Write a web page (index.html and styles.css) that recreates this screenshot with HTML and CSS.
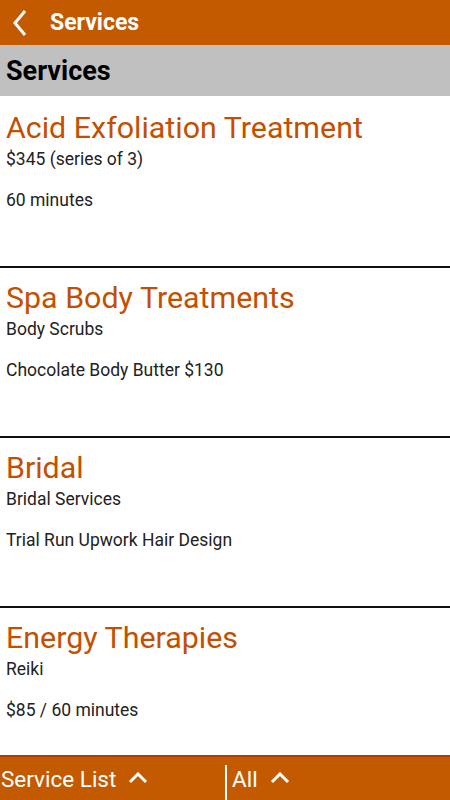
FILE: index.html
```html
<!DOCTYPE html>
<html>
<head>
<meta charset="utf-8">
<link rel="stylesheet" href="styles.css">
</head>
<body>
<div class="app">
  <header class="topbar">
    <svg class="back" width="16" height="28" viewBox="0 0 16 28"><path d="M13 2 L3 14 L13 26" fill="none" stroke="#fff" stroke-width="3"/></svg>
    <span class="topbar-title">Services</span>
  </header>
  <div class="section-head">Services</div>
  <main class="list">
    <div class="item">
      <div class="title">Acid Exfoliation Treatment</div>
      <div class="sub">$345 (series of 3)</div>
      <div class="detail">60 minutes</div>
    </div>
    <div class="item">
      <div class="title">Spa Body Treatments</div>
      <div class="sub">Body Scrubs</div>
      <div class="detail">Chocolate Body Butter $130</div>
    </div>
    <div class="item">
      <div class="title">Bridal</div>
      <div class="sub">Bridal Services</div>
      <div class="detail">Trial Run Upwork Hair Design</div>
    </div>
    <div class="item">
      <div class="title">Energy Therapies</div>
      <div class="sub">Reiki</div>
      <div class="detail">$85 / 60 minutes</div>
    </div>
  </main>
  <footer class="bottombar">
    <div class="tab tab-left">Service List <svg class="up" width="20" height="12" viewBox="0 0 20 12"><path d="M2 10 L10 2 L18 10" fill="none" stroke="#fff" stroke-width="3"/></svg></div>
    <div class="divider"></div>
    <div class="tab tab-right">All <svg class="up" width="20" height="12" viewBox="0 0 20 12"><path d="M2 10 L10 2 L18 10" fill="none" stroke="#fff" stroke-width="3"/></svg></div>
  </footer>
</div>
</body>
</html>
```
FILE: styles.css
```css
* { box-sizing: border-box; }
html, body { margin: 0; padding: 0; }
body { font-family: Roboto, "Liberation Sans", sans-serif; background: #fff; }
.app { width: 450px; height: 800px; display: flex; flex-direction: column; overflow: hidden; }
.topbar { height: 45px; background: #c45a00; display: flex; align-items: center; flex-shrink: 0; }
.back { margin-left: 12px; }
.topbar-title { color: #fff; font-weight: bold; font-size: 23px; margin-left: 22px; }
.section-head { height: 51px; background: #c0c0c0; color: #000; font-weight: bold; font-size: 27px; padding-left: 6px; display: flex; align-items: center; flex-shrink: 0; }
.list { flex: 1; overflow: hidden; }
.item { height: 170px; border-top: 2px solid #111; padding: 10px 6px 0; }
.item:first-child { border-top: none; padding-top: 12px; }
.title { color: #c44f00; font-size: 30.4px; line-height: 40px; }
.sub { color: #222; font-size: 17.5px; line-height: 22px; margin-top: 0; }
.detail { color: #222; font-size: 17.5px; line-height: 22px; margin-top: 19px; }
.bottombar { height: 45px; background: #c45a00; border-top: 2px solid #b03a00; display: flex; align-items: center; flex-shrink: 0; color: #fff; font-size: 22.5px; }
.tab { display: flex; align-items: center; }
.tab-left { width: 225px; padding-left: 1px; }
.up { margin-left: 12px; margin-bottom: 2px; }
.divider { width: 2px; height: 35px; background: #fff; margin-top: 8px; }
.tab-right { padding-left: 5px; }
```
